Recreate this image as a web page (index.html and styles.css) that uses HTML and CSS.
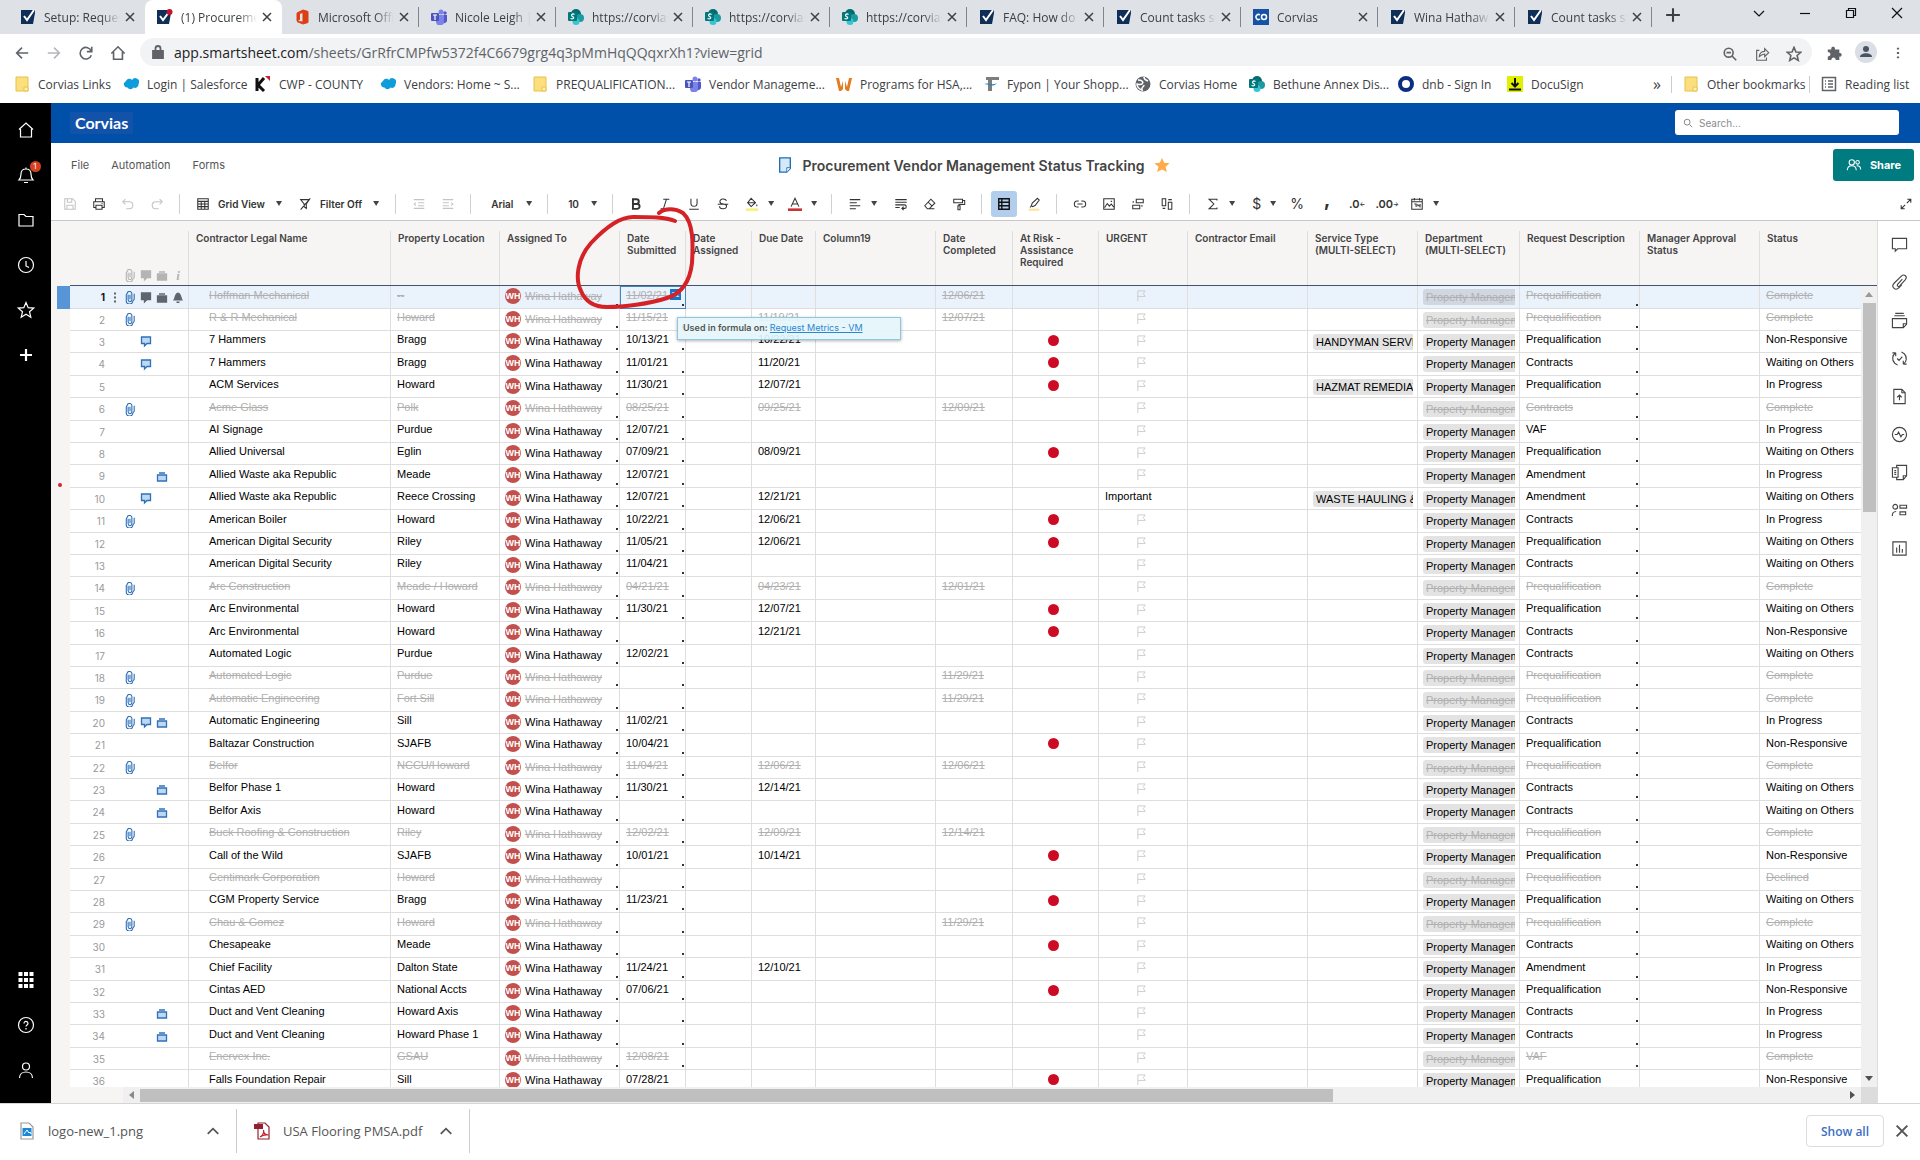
FILE: index.html
```html
<!DOCTYPE html>
<html lang="en">
<head>
    <meta charset="UTF-8">
    <meta name="viewport" content="width=device-width, initial-scale=1.0">
    <title>Procurement Vendor Management Status Tracking</title>
    <link rel="stylesheet" href="styles.css">
</head>
<body>
    <svg class="symbols" aria-hidden="true">
        <symbol id="i-smart" viewBox="0 0 14 16"><path d="M0 1h14v3l-2 11H0z" fill="#0f2f57"/><path d="M3 7l3 4 7-10" fill="none" stroke="#fff" stroke-width="2"/></symbol>
        <symbol id="i-smart-new" viewBox="0 0 16 16"><path d="M0 1h14v3l-2 11H0z" fill="#0f2f57"/><path d="M3 7l3 4 6-8" fill="none" stroke="#fff" stroke-width="2"/><circle cx="12.500" cy="3" r="3" fill="#c8102e"/></symbol>
        <symbol id="i-office" viewBox="0 0 16 16"><path d="M9 1l5 1.500v11L9 15l-6-2.500 6 .500V3.500L5.500 4.500v6L3 12V4z" fill="#dc3e15" stroke="#dc3e15"/></symbol>
        <symbol id="i-teams" viewBox="0 0 16 16"><circle cx="10" cy="3" r="2.500" fill="#7b83eb"/><circle cx="14" cy="4" r="1.700" fill="#5059c9"/><path d="M11 6h5v5a3 3 0 0 1-4 3z" fill="#5059c9"/><path d="M5 6h8v6a4 4 0 0 1-8 1z" fill="#7b83eb"/><rect x="0" y="4" width="8" height="8" rx="1" fill="#4b53bc"/><path d="M2 6h4M4 6v5" stroke="#fff" stroke-width="1.200"/></symbol>
        <symbol id="i-share-pt" viewBox="0 0 16 16"><circle cx="8" cy="5" r="5" fill="#036c70"/><circle cx="12" cy="9" r="4" fill="#1a9ba1"/><circle cx="8" cy="12.500" r="3.500" fill="#37c6d0"/><rect x="0" y="3" width="9" height="9" rx="1" fill="#03787c"/><path d="M6.500 5.500C4 4 2.500 6.500 4.500 7.500s1.500 3-2 2" fill="none" stroke="#fff" stroke-width="1.200"/></symbol>
        <symbol id="i-co" viewBox="0 0 16 16"><rect width="16" height="16" fill="#1552a5"/><circle cx="11" cy="8" r="2.500" fill="none" stroke="#fff" stroke-width="1.500"/><path d="M7 6a2.500 2.500 0 1 0 0 4" fill="none" stroke="#fff" stroke-width="1.500"/></symbol>
        <symbol id="i-x" viewBox="0 0 12 12"><path d="M2 2l8 8M10 2l-8 8" stroke="currentColor" stroke-width="1.500"/></symbol>
        <symbol id="i-folder-y" viewBox="0 0 16 16"><path d="M2 1h12v14H2z" fill="#fbdf7c" stroke="#e9c04d"/><path d="M10 11h4v4h-4z" fill="#fff0b5" stroke="#e9c04d"/></symbol>
        <symbol id="i-cloud" viewBox="0 0 16 16"><path d="M3 5a3.500 3.500 0 0 1 6-1 3.500 3.500 0 0 1 6.500 4 3.500 3.500 0 0 1-5 3.500 3.500 3.500 0 0 1-6 0A3.500 3.500 0 0 1 1 7z" fill="#0d9dda"/></symbol>
        <symbol id="i-k" viewBox="0 0 16 16"><path d="M2 2v13M9 2L3 9l6 6" fill="none" stroke="#111" stroke-width="3"/><path d="M10 0h5v5z" fill="#c8202f"/></symbol>
        <symbol id="i-w" viewBox="0 0 16 16"><path d="M0 2h3l2 9 2-6v8l-2 2H3zM16 2h-3l-2 9-2-6v8l2 2h2z" fill="#e47b1f"/></symbol>
        <symbol id="i-f" viewBox="0 0 16 16"><path d="M3 1h13v3H9v11H5V4H3z" fill="#7d7d7d"/><path d="M1 8c4-2 8 2 13-1-4 5-9 1-13 1z" fill="#2585c5"/></symbol>
        <symbol id="i-globe" viewBox="0 0 16 16"><circle cx="8" cy="8" r="7.500" fill="#5f6368"/><path d="M3 4c4 0 6 2 4 4-2 1-4 0-5 0 0 3 2 5 5 6-1-3 2-3 2-5M9 1c0 3 2 3 4 4" fill="none" stroke="#fff" stroke-width="1.500"/></symbol>
        <symbol id="i-dnb" viewBox="0 0 16 16"><circle cx="8" cy="8" r="6" fill="#fff" stroke="#0b2e83" stroke-width="4"/></symbol>
        <symbol id="i-docu" viewBox="0 0 16 16"><rect width="16" height="16" fill="#dff000"/><path d="M8 2v8M4.500 7L8 10.500 11.500 7M2 13.500h12" fill="none" stroke="#111" stroke-width="2"/></symbol>
        <symbol id="i-reading" viewBox="0 0 16 16" ><path d="M1.500 1.500h13v13h-13zM4 5h1M4 8h1M4 11h1M7 5h5M7 8h5M7 11h5" fill="none" stroke="#5f6368" stroke-width="1.500"/></symbol>

        <symbol id="i-home" viewBox="0 0 18 18"><path d="M2 8.500L9 2l7 6.500M3.500 8v8h11V8"/></symbol>
        <symbol id="i-bell" viewBox="0 0 18 18"><path d="M2 14h14c-2-2-2-3-2-6 0-3-2-5-5-5S4 5 4 8c0 3 0 4-2 6zM7 16.500h4M9 3V1.500"/></symbol>
        <symbol id="i-folder" viewBox="0 0 18 18"><path d="M2 3.500h5l2 2h7v9.500H2z"/></symbol>
        <symbol id="i-clock" viewBox="0 0 18 18"><circle cx="9" cy="9" r="7.500"/><path d="M9 5v5l3 1.500"/></symbol>
        <symbol id="i-star" viewBox="0 0 18 18"><path d="M9 1.500l2.200 5.200 5.500.400-4.200 3.600 1.300 5.500L9 13.300l-4.800 2.900 1.300-5.500L1.300 7.100l5.500-.400z"/></symbol>
        <symbol id="i-plus" viewBox="0 0 18 18"><path d="M9 3v12M3 9h12" stroke-width="2.200"/></symbol>
        <symbol id="i-apps" viewBox="0 0 18 18"><path d="M3.500 1v16M9 1v16M14.500 1v16" stroke-width="4" stroke-dasharray="4 2"/></symbol>
        <symbol id="i-help" viewBox="0 0 18 18"><circle cx="9" cy="9" r="7.500"/><path d="M7 7.500c0-3 4-2.500 4 0 0 1.500-2 1.500-2 3M9 12v1.500"/></symbol>
        <symbol id="i-user" viewBox="0 0 18 18"><circle cx="9" cy="5.500" r="3.500"/><path d="M2.500 17c0-8 13-8 13 0"/></symbol>

        <symbol id="i-save" viewBox="0 0 16 16"><path d="M2 2h9l3 3v9H2zM5 2v4h5V2M4.500 14V9.500h7V14"/></symbol>
        <symbol id="i-print" viewBox="0 0 16 16"><path d="M4 5.500V2h8v3.500M4 12H2V5.500h12V12h-2M4.500 9.500h7V14h-7zM11 7.500h1"/></symbol>
        <symbol id="i-undo" viewBox="0 0 16 16"><path d="M5 2.500L2 5.500l3 3M2 5.500h7.500a4 4 0 0 1 0 8H6"/></symbol>
        <symbol id="i-redo" viewBox="0 0 16 16"><path d="M11 2.500l3 3-3 3M14 5.500H6.500a4 4 0 0 0 0 8H10"/></symbol>
        <symbol id="i-gridview" viewBox="0 0 16 16"><path d="M2 2h12v12H2zM2 5h12M2 8h12M2 11h12M6 5v9M10 5v9"/></symbol>
        <symbol id="i-filter" viewBox="0 0 16 16"><path d="M3 3h10L9.500 8v5L7 11V8zM14 1.500L3 14.500"/></symbol>
        <symbol id="i-outdent" viewBox="0 0 16 16"><path d="M2 3h12M7 6.500h7M7 10h7M2 13h12M4.500 6.500l-2 1.700 2 1.700"/></symbol>
        <symbol id="i-indent" viewBox="0 0 16 16"><path d="M2 3h12M2 6.500h7M2 10h7M2 13h12M11.500 6.500l2 1.700-2 1.700"/></symbol>
        <symbol id="i-bold" viewBox="0 0 16 16"><path d="M4.500 2.500h4a2.700 2.700 0 0 1 0 5.400h-4zM4.500 8h4.800a2.800 2.800 0 0 1 0 5.600H4.500z" stroke-width="2.200"/></symbol>
        <symbol id="i-italic" viewBox="0 0 16 16"><path d="M6 2.500h7M3 13.500h7M9.700 2.500l-3.500 11"/></symbol>
        <symbol id="i-underline" viewBox="0 0 16 16"><path d="M4.500 2v5a3.500 3.500 0 0 0 7 0V2M2.500 14h11"/></symbol>
        <symbol id="i-strike" viewBox="0 0 16 16"><path d="M12 4.500c-1-3-8-3-7.500 1 .3 1.700 2 2.300 4 2.500s4 1 3.500 3.200c-1 3-8 3-8-.7M2 8.300h12"/></symbol>
        <symbol id="i-fill" viewBox="0 0 16 16"><path d="M7 1.500l5 5L7 11 3 6.500zM3 6.500h9M13.500 8.500v2"/><path d="M1 14.500h14" stroke="#f4f47c" stroke-width="3"/></symbol>
        <symbol id="i-color" viewBox="0 0 16 16"><path d="M3.500 11L8 1.500l4.500 9.500M5 8h6"/><path d="M0 14.500h16" stroke="#cb3136" stroke-width="3"/></symbol>
        <symbol id="i-align" viewBox="0 0 16 16"><path d="M2 3h12M2 6.500h8M2 10h12M2 13.500h7"/></symbol>
        <symbol id="i-wrap" viewBox="0 0 16 16"><path d="M1.500 3h13M1.500 6h13M1.500 9h10.500a2 2 0 0 1 0 4H9M11 11l-2 2 2 2M1.500 12h5"/></symbol>
        <symbol id="i-eraser" viewBox="0 0 16 16"><path d="M2 10l7-7.500 4.500 4.500L7 13.500H5zM6 6l4.500 4.500M7 13.500h6"/></symbol>
        <symbol id="i-painter" viewBox="0 0 16 16"><path d="M2 2.500h10v4H2zM12 4h2.500v4.500H8V10M6.800 10h2.400v4.500H6.800z"/></symbol>
        <symbol id="i-rows" viewBox="0 0 16 16"><path d="M2 2h12v12H2zM5.500 2v12M2 6h12M2 10h12" stroke-width="1.600"/></symbol>
        <symbol id="i-marker" viewBox="0 0 16 16"><path d="M12 1.500l2 2-4.500 6-3 1.500-1.500-1 1-3zM5 10l-1.500 2"/><path d="M2 14.500h12" stroke="#f8e5a2" stroke-width="2.500"/></symbol>
        <symbol id="i-link" viewBox="0 0 16 16"><path d="M6.500 4.500H5a3.500 3.500 0 0 0 0 7h1.500M9.500 4.500H11a3.500 3.500 0 0 1 0 7H9.500M5 8h6"/></symbol>
        <symbol id="i-image" viewBox="0 0 16 16"><path d="M2 2h12v12H2zM3 12l3-4.500 2.500 3L10.500 8l3 3.500M10 5h1.500"/></symbol>
        <symbol id="i-card" viewBox="0 0 16 16"><path d="M6 2.500h8v4H6zM2 9.500h8v4H2zM2.500 6.500v-2M12.500 9v2"/></symbol>
        <symbol id="i-cols" viewBox="0 0 16 16"><path d="M2.500 2h4v8h-4zM9.500 6h4v8h-4zM9.500 3h4M3 13h3"/></symbol>
        <symbol id="i-sum" viewBox="0 0 16 16"><path d="M12.500 4V2.500h-9L9 8l-5.500 5.500h9V12"/></symbol>
        <symbol id="i-date" viewBox="0 0 16 16"><path d="M2 2.500h12V14H2zM2 5.500h12M5 1v3M11 1v3M5 8h2v3.500M9 8v2h2.500M11.500 8v4"/></symbol>
        <symbol id="i-expand" viewBox="0 0 16 16"><path d="M9 7l4.500-4.500M9.500 2.500h4v4M7 9l-4.500 4.500M2.500 9.500v4h4"/></symbol>
        <symbol id="i-people" viewBox="0 0 18 16"><circle cx="6.500" cy="5" r="3"/><circle cx="13" cy="5" r="2"/><path d="M1.500 14c0-7 10-7 10 0M12 9c3-.5 4.500 1.500 4.500 4"/></symbol>

        <symbol id="r-comment" viewBox="0 0 18 18"><path d="M1.500 2.500h15v11H7l-2.500 2.500v-2.500h-3z"/></symbol>
        <symbol id="r-clip" viewBox="0 0 18 18"><path d="M12 5.500l-5 5.500c-1 1.500.8 3 2 1.800l6-6.500c3-3.500-1-7-4-4L3.500 9.500c-4 4 1 9 5 5l3-3.200"/></symbol>
        <symbol id="r-proof" viewBox="0 0 18 18"><path d="M4.500 1.500h9M3.500 4h11M1.500 7h15v6L13 16.500H1.500zM16.500 12.500H13v4"/></symbol>
        <symbol id="r-update" viewBox="0 0 18 18"><path d="M5 3a7 7 0 0 0-1 11l3 2M5 3H1.500M5 3v3.500M13 15a7 7 0 0 0 1-11l-3-2M13 15h3.500M13 15v-3.500M6.500 9l2 2 3.500-4"/></symbol>
        <symbol id="r-publish" viewBox="0 0 18 18"><path d="M3 1.500h8.500L15 5v11.500H3zM11.500 1.500V5H15M9 13V7.500M6.500 10L9 7.500l2.500 2.500"/></symbol>
        <symbol id="r-activity" viewBox="0 0 18 18"><circle cx="9" cy="9" r="7.500"/><path d="M4 9h2.500L8 6.500l2.500 5L12 9h2"/></symbol>
        <symbol id="r-summary" viewBox="0 0 18 18"><path d="M6 4V1.500h10.500v11L13 16.500H6V14M16.500 12.500H13v4M1.500 4h6v10h-6zM3.500 7h2M3.500 9h2M3.500 11h2"/></symbol>
        <symbol id="r-contacts" viewBox="0 0 18 18"><circle cx="4.500" cy="5" r="2.500"/><path d="M1.500 15c-.5-3 1-5 4-5M9.500 3.500h7v3h-7zM9.500 10.500h6v3h-6z"/></symbol>
        <symbol id="r-chart" viewBox="0 0 18 18"><path d="M2 2h14v14H2zM6 8v5.500M9 5v8.500M12 9.500v4"/></symbol>

        <symbol id="g-clip" viewBox="0 0 12 14"><path d="M4 4v5.500a2 2 0 0 0 4 0V3.500a2.500 2.500 0 0 0-5-1L2 4v6a3.500 3.500 0 0 0 7 1l1.500-2V3M6 4v5" fill="none" stroke="currentColor" stroke-width="1.200"/></symbol>
        <symbol id="g-comment" viewBox="0 0 12 12"><path d="M1.500 1.500h9v6.500H7L4.500 10.500V8h-3z" fill="var(--soft)" stroke="currentColor" stroke-width="1.300"/></symbol>
        <symbol id="g-case" viewBox="0 0 12 12"><path d="M1.500 4.500h9v6h-9zM3 2.500h6" fill="var(--soft)" stroke="currentColor" stroke-width="1.300"/></symbol>
        <symbol id="g-bell" viewBox="0 0 12 12"><path d="M1 9c2-2 1-7 5-8 4 1 3 6 5 8zM4.500 10h3v1.500h-3z" fill="currentColor"/></symbol>
        <symbol id="g-dots" viewBox="0 0 12 12"><path d="M6 1h2v2H6zM6 5h2v2H6zM6 9h2v2H6z" fill="currentColor"/></symbol>
        <symbol id="g-flag" viewBox="0 0 12 14"><path d="M2 13V2h8L8 5l2 3H2" fill="none" stroke="#c9c9c9"/></symbol>
    </svg>

    <header class="browser">
        <div class="tabs">
            <button class="tab plain"><svg><use href="#i-smart"/></svg><span>Setup: Request</span><svg class="x"><use href="#i-x"/></svg></button>
            <button class="tab active"><svg><use href="#i-smart-new"/></svg><span>(1) Procurement</span><svg class="x"><use href="#i-x"/></svg></button>
            <button class="tab"><svg><use href="#i-office"/></svg><span>Microsoft Office</span><svg class="x"><use href="#i-x"/></svg></button>
            <button class="tab"><svg><use href="#i-teams"/></svg><span>Nicole Leigh | M</span><svg class="x"><use href="#i-x"/></svg></button>
            <button class="tab"><svg><use href="#i-share-pt"/></svg><span>https://corvias</span><svg class="x"><use href="#i-x"/></svg></button>
            <button class="tab"><svg><use href="#i-share-pt"/></svg><span>https://corvias</span><svg class="x"><use href="#i-x"/></svg></button>
            <button class="tab"><svg><use href="#i-share-pt"/></svg><span>https://corvias</span><svg class="x"><use href="#i-x"/></svg></button>
            <button class="tab"><svg><use href="#i-smart"/></svg><span>FAQ: How do I</span><svg class="x"><use href="#i-x"/></svg></button>
            <button class="tab"><svg><use href="#i-smart"/></svg><span>Count tasks su</span><svg class="x"><use href="#i-x"/></svg></button>
            <button class="tab"><svg><use href="#i-co"/></svg><span>Corvias</span><svg class="x"><use href="#i-x"/></svg></button>
            <button class="tab"><svg><use href="#i-smart"/></svg><span>Wina Hathaway</span><svg class="x"><use href="#i-x"/></svg></button>
            <button class="tab"><svg><use href="#i-smart"/></svg><span>Count tasks su</span><svg class="x"><use href="#i-x"/></svg></button>
            <button class="new-tab line" aria-label="New tab"><svg viewBox="0 0 14 14"><path d="M7 1v12M1 7h12" stroke-width="1.800"/></svg></button>
            <div class="window-btns line">
                <button aria-label="Search tabs"><svg viewBox="0 0 12 12"><path d="M1 4l5 5 5-5"/></svg></button>
                <button aria-label="Minimize"><svg viewBox="0 0 12 12"><path d="M1 6.500h10"/></svg></button>
                <button aria-label="Restore"><svg viewBox="0 0 12 12"><path d="M1.500 3.500h7v7h-7zM3.500 3V1.500h7v7H9"/></svg></button>
                <button aria-label="Close"><svg viewBox="0 0 12 12"><path d="M1 1l10 10M11 1L1 11"/></svg></button>
            </div>
        </div>
        <div class="address line">
            <button aria-label="Back"><svg viewBox="0 0 18 18"><path d="M16 9H3M9 3L3 9l6 6"/></svg></button>
            <button class="off" aria-label="Forward"><svg viewBox="0 0 18 18"><path d="M2 9h13M9 3l6 6-6 6"/></svg></button>
            <button aria-label="Reload"><svg viewBox="0 0 18 18"><path d="M15 7a6.500 6.500 0 1 0 0 4.500M15.500 2v5.500H10"/></svg></button>
            <button aria-label="Home"><svg viewBox="0 0 18 18"><path d="M1.500 9.500L9 2l7.500 7.500M4 8v8h10V8"/></svg></button>
            <div class="omnibox">
                <svg class="lock" viewBox="0 0 12 14"><path d="M1 6h10v7H1z" fill="#5f6368"/><path d="M3.500 6V3.500a2.500 2.500 0 0 1 5 0V6"/></svg>
                <a href="#"><b>app.smartsheet.com</b>/sheets/GrRfrCMPfw5372f4C6679grg4q3pMmHqQQqxrXh1?view=grid</a>
                <button aria-label="Zoom"><svg viewBox="0 0 18 18"><circle cx="7.500" cy="7.500" r="5"/><path d="M11 11l5 5M5 7.500h5"/></svg></button>
                <button aria-label="Share page"><svg viewBox="0 0 18 18"><path d="M6 5H3v11h11v-3M6 12c0-4 3-6 6-6V3l4.500 4.500L12 12V9c-3 0-4 1-6 3z" stroke-width="1.300"/></svg></button>
                <button aria-label="Bookmark"><svg><use href="#i-star"/></svg></button>
            </div>
            <button class="ext" aria-label="Extensions"><svg viewBox="0 0 18 18"><path d="M2 5h4c-1-4 5-4 4 0h5v4c3.500-1 3.500 5 0 4v4h-4c0-4-5-4-5 0H2v-4c4 0 4-5 0-5z" fill="#5f6368" stroke="none"/></svg></button>
            <button class="me" aria-label="Profile"><svg viewBox="0 0 22 22"><circle cx="11" cy="11" r="11" fill="#dadfe6" stroke="none"/><path d="M5 16c0-5 12-5 12 0z" fill="#4a5366" stroke="none"/><circle cx="11" cy="8" r="3" fill="#4a5366" stroke="none"/></svg></button>
            <button aria-label="Menu"><svg viewBox="0 0 18 18"><path d="M9 3v2M9 8v2M9 13v2" stroke-width="2.500"/></svg></button>
        </div>
        <nav class="bookmarks">
            <a href="#"><svg><use href="#i-folder-y"/></svg>Corvias Links</a>
            <a href="#"><svg><use href="#i-cloud"/></svg>Login | Salesforce</a>
            <a href="#"><svg><use href="#i-k"/></svg>CWP - COUNTY</a>
            <a href="#"><svg><use href="#i-cloud"/></svg>Vendors: Home ~ S...</a>
            <a href="#"><svg><use href="#i-folder-y"/></svg>PREQUALIFICATION...</a>
            <a href="#"><svg><use href="#i-teams"/></svg>Vendor Manageme...</a>
            <a href="#"><svg><use href="#i-w"/></svg>Programs for HSA,...</a>
            <a href="#"><svg><use href="#i-f"/></svg>Fypon | Your Shopp...</a>
            <a href="#"><svg><use href="#i-globe"/></svg>Corvias Home</a>
            <a href="#"><svg><use href="#i-share-pt"/></svg>Bethune Annex Dis...</a>
            <a href="#"><svg><use href="#i-dnb"/></svg>dnb - Sign In</a>
            <a href="#"><svg><use href="#i-docu"/></svg>DocuSign</a>
            <button class="more" aria-label="More bookmarks">»</button>
            <a href="#" class="edge"><svg><use href="#i-folder-y"/></svg>Other bookmarks</a>
            <a href="#" class="edge"><svg><use href="#i-reading"/></svg>Reading list</a>
        </nav>
    </header>

    <div class="app">
        <nav class="side line">
            <button aria-label="Home"><svg><use href="#i-home"/></svg></button>
            <button aria-label="Notifications"><svg><use href="#i-bell"/></svg><span class="badge">1</span></button>
            <button aria-label="Browse"><svg><use href="#i-folder"/></svg></button>
            <button aria-label="Recents"><svg><use href="#i-clock"/></svg></button>
            <button aria-label="Favorites"><svg><use href="#i-star"/></svg></button>
            <button aria-label="Create"><svg><use href="#i-plus"/></svg></button>
            <button class="push" aria-label="Apps"><svg><use href="#i-apps"/></svg></button>
            <button aria-label="Help"><svg><use href="#i-help"/></svg></button>
            <button aria-label="Account"><svg><use href="#i-user"/></svg></button>
        </nav>

        <div class="work">
            <div class="brand">
                <span class="logo">Corvias</span>
                <label class="search line"><svg viewBox="0 0 12 12"><circle cx="5" cy="5" r="3.500"/><path d="M8 8l3 3"/></svg><input type="text" placeholder="Search..." aria-label="Search"></label>
            </div>
            <div class="title-bar">
                <div class="menus"><button>File</button><button>Automation</button><button>Forms</button></div>
                <div class="title">
                    <svg viewBox="0 0 14 18"><path d="M1 1h12v12l-4 4H1z" fill="#d5e9fa" stroke="#1f6fb5" stroke-width="1.500"/><path d="M13 12H9v5" fill="#fff" stroke="#1f6fb5"/></svg>
                    <h1>Procurement Vendor Management Status Tracking</h1>
                    <svg viewBox="0 0 18 18"><path d="M9 1l2.500 5.500 6 .500-4.500 4 1.500 6L9 14l-5.500 3L5 11 .5 7l6-.5z" fill="#fdab4b"/></svg>
                </div>
                <div class="share-wrap"><button class="share line"><svg><use href="#i-people"/></svg>Share</button></div>
            </div>
            <div class="toolbar line">
                <button class="off" aria-label="Save"><svg><use href="#i-save"/></svg></button>
                <button aria-label="Print"><svg><use href="#i-print"/></svg></button>
                <button class="off" aria-label="Undo"><svg><use href="#i-undo"/></svg></button>
                <button class="off" aria-label="Redo"><svg><use href="#i-redo"/></svg></button>
                <i class="sep"></i>
                <button class="wide"><svg><use href="#i-gridview"/></svg>Grid View<i class="caret"></i></button>
                <button class="wide"><svg><use href="#i-filter"/></svg>Filter Off<i class="caret"></i></button>
                <i class="sep"></i>
                <button class="off" aria-label="Outdent"><svg><use href="#i-outdent"/></svg></button>
                <button class="off" aria-label="Indent"><svg><use href="#i-indent"/></svg></button>
                <i class="sep"></i>
                <label class="pick"><select class="face" aria-label="Font"><option>Arial</option></select><i class="caret"></i></label>
                <i class="sep"></i>
                <label class="pick"><select class="size" aria-label="Font size"><option>10</option></select><i class="caret"></i></label>
                <i class="sep"></i>
                <button aria-label="Bold"><svg><use href="#i-bold"/></svg></button>
                <button aria-label="Italic"><svg><use href="#i-italic"/></svg></button>
                <button aria-label="Underline"><svg><use href="#i-underline"/></svg></button>
                <button aria-label="Strikethrough"><svg><use href="#i-strike"/></svg></button>
                <button class="drop" aria-label="Fill color"><svg><use href="#i-fill"/></svg><i class="caret"></i></button>
                <button class="drop" aria-label="Text color"><svg><use href="#i-color"/></svg><i class="caret"></i></button>
                <i class="sep"></i>
                <button class="drop roomy" aria-label="Align"><svg><use href="#i-align"/></svg><i class="caret"></i></button>
                <button aria-label="Wrap"><svg><use href="#i-wrap"/></svg></button>
                <button aria-label="Clear format"><svg><use href="#i-eraser"/></svg></button>
                <button aria-label="Format painter"><svg><use href="#i-painter"/></svg></button>
                <i class="sep"></i>
                <button class="on" aria-label="Conditional formatting"><svg><use href="#i-rows"/></svg></button>
                <button aria-label="Highlight changes"><svg><use href="#i-marker"/></svg></button>
                <i class="sep"></i>
                <button aria-label="Link"><svg><use href="#i-link"/></svg></button>
                <button aria-label="Image"><svg><use href="#i-image"/></svg></button>
                <button aria-label="Cell linking"><svg><use href="#i-card"/></svg></button>
                <button aria-label="Columns"><svg><use href="#i-cols"/></svg></button>
                <i class="sep"></i>
                <button class="drop" aria-label="Functions"><svg><use href="#i-sum"/></svg><i class="caret"></i></button>
                <button class="drop glyph">$<i class="caret"></i></button>
                <button class="glyph">%</button>
                <button class="glyph heavy">,</button>
                <button class="glyph small">.0<sub>←</sub></button>
                <button class="glyph small">.00<sub>→</sub></button>
                <button class="drop" aria-label="Date format"><svg><use href="#i-date"/></svg><i class="caret"></i></button>
                <button class="last" aria-label="Expand"><svg><use href="#i-expand"/></svg></button>
            </div>

            <div class="sheet">
                <div class="strip"><div class="row-mark"></div></div>
                <div class="grid-area">
                    <div class="table-wrap">
                        <table>
                            <colgroup>
                                <col class="w-gutter"><col class="w-name"><col class="w-loc"><col class="w-120"><col class="w-date"><col class="w-date"><col class="w-due"><col class="w-120"><col class="w-done"><col class="w-risk"><col class="w-urgent"><col class="w-120"><col class="w-service"><col class="w-dept"><col class="w-120"><col class="w-120"><col>
                            </colgroup>
                            <thead>
                                <tr>
                                    <th><div class="gutter-head"><svg><use href="#g-clip"/></svg><svg><use href="#g-comment"/></svg><svg><use href="#g-case"/></svg><em>i</em></div></th>
                                    <th><div>Contractor Legal Name</div></th>
                                    <th><div>Property Location</div></th>
                                    <th><div>Assigned To</div></th>
                                    <th><div>Date<br>Submitted</div></th>
                                    <th><div>Date<br>Assigned</div></th>
                                    <th><div>Due Date</div></th>
                                    <th><div>Column19</div></th>
                                    <th><div>Date<br>Completed</div></th>
                                    <th><div>At Risk -<br>Assistance<br>Required</div></th>
                                    <th><div>URGENT</div></th>
                                    <th><div>Contractor Email</div></th>
                                    <th><div>Service Type<br>(MULTI-SELECT)</div></th>
                                    <th><div>Department<br>(MULTI-SELECT)</div></th>
                                    <th><div>Request Description</div></th>
                                    <th><div>Manager Approval<br>Status</div></th>
                                    <th><div>Status</div></th>
                                </tr>
                            </thead>
                            <tbody id="rows"></tbody>
                        </table>
                        <div class="formula-tip">Used in formula on: <a href="#">Request Metrics - VM</a></div>
                    </div>
                    <div class="vscroll"><div class="vhead"></div><i class="up"></i><div class="vthumb"></div><i class="down"></i></div>
                    <div class="hscroll"><i class="left"></i><div class="htrack"><div class="hthumb"></div></div><i class="right"></i></div>
                    <div class="corner"></div>
                </div>
                <nav class="rail line">
                    <button aria-label="Conversations"><svg><use href="#r-comment"/></svg></button>
                    <button aria-label="Attachments"><svg><use href="#r-clip"/></svg></button>
                    <button aria-label="Proofs"><svg><use href="#r-proof"/></svg></button>
                    <button aria-label="Update requests"><svg><use href="#r-update"/></svg></button>
                    <button aria-label="Publish"><svg><use href="#r-publish"/></svg></button>
                    <button aria-label="Activity log"><svg><use href="#r-activity"/></svg></button>
                    <button aria-label="Sheet summary"><svg><use href="#r-summary"/></svg></button>
                    <button aria-label="Contacts"><svg><use href="#r-contacts"/></svg></button>
                    <button aria-label="Charts"><svg><use href="#r-chart"/></svg></button>
                </nav>
                <svg class="ink" viewBox="0 0 130 110"><path d="M104 16C94 12 80 12 62 12C48 12 34 23 20 38C6 54 4 74 10 86C15 98 24 102 36 102C52 102 78 99 96 93C112 88 119 76 121 58C122 40 123 18 112 8C104 3 94 3 88 8"/></svg>
                <i class="ink-dot"></i>
            </div>
        </div>
    </div>

    <footer class="downloads line">
        <button class="file">
            <svg viewBox="0 0 16 18"><path d="M2 1h8l4 4v12H2z" fill="#fff" stroke="#999"/><path d="M3.500 6h9v8h-9z" fill="#1b87d6" stroke="none"/><path d="M5 12l3-4 2 3 1-1 1 2" stroke="#fff" stroke-width="1"/></svg>
            <span>logo-new_1.png</span>
            <svg viewBox="0 0 12 12"><path d="M1.500 8.500L6 4l4.500 4.500"/></svg>
        </button>
        <button class="file">
            <svg viewBox="0 0 16 18"><path d="M4 1h7l4 4v12H4z" fill="#fff" stroke="#93202f"/><path d="M0 2h9v5H0z" fill="#93202f" stroke="none"/><path d="M6 15c3-2 4-5 3.500-7 0 3 2 5 5 5-3-.5-6 0-8.500 2z" stroke="#c0202f" stroke-width="1.200"/></svg>
            <span>USA Flooring PMSA.pdf</span>
            <svg viewBox="0 0 12 12"><path d="M1.500 8.500L6 4l4.500 4.500"/></svg>
        </button>
        <button class="show-all">Show all</button>
        <button class="close" aria-label="Close downloads"><svg><use href="#i-x"/></svg></button>
    </footer>

    <script src="script.js"></script>
</body>
</html>
```

FILE: styles.css
```css
* {
    box-sizing: border-box;
}
body {
    margin: 0;
    height: 100vh;
    display: flex;
    flex-direction: column;
    overflow: hidden;
    background: #fff;
    color: #3c4043;
    font-family: "Open Sans", "Noto Sans", sans-serif;
    font-size: 12px;
}
button, input, select {
    font: inherit;
    color: inherit;
    border: 0;
    padding: 0;
    background: none;
}
a {
    color: inherit;
    text-decoration: none;
}
svg {
    width: 16px;
    height: 16px;
    flex: none;
}
.symbols {
    display: none;
}
.line svg {
    fill: none;
    stroke: currentColor;
    stroke-width: 1.2;
}

/* browser chrome */
.browser {
    flex: none;
}
.tabs {
    display: flex;
    height: 34px;
    padding-left: 8px;
    background: #dee1e6;
}
.tab {
    position: relative;
    display: flex;
    align-items: center;
    width: 137px;
    padding: 0 9px 0 12px;
    text-align: left;
}
.tab::after {
    content: "";
    position: absolute;
    right: 0;
    top: 7px;
    width: 1px;
    height: 20px;
    background: #80868b;
}
.tab.plain::after, .tab.active::after {
    display: none;
}
.tab span {
    flex: 1;
    margin: 0 4px 0 8px;
    overflow: hidden;
    white-space: nowrap;
    -webkit-mask-image: linear-gradient(to right, #000 75%, transparent);
    mask-image: linear-gradient(to right, #000 75%, transparent);
}
.tab.active {
    background: #fff;
    border-radius: 8px 8px 0 0;
}
.tab .x {
    width: 12px;
    height: 12px;
}
.new-tab {
    width: 42px;
}
.window-btns {
    display: flex;
    margin-left: auto;
    height: 28px;
    color: #111;
}
.window-btns button {
    width: 46px;
}
.window-btns svg {
    width: 12px;
    height: 12px;
}
.address {
    display: flex;
    align-items: center;
    height: 36px;
    padding: 0 6px;
    color: #5f6368;
}
.address button {
    width: 32px;
    height: 28px;
}
.address svg {
    width: 16px;
    height: 16px;
    stroke-width: 1.8;
    vertical-align: middle;
}
.address .off {
    color: #b4b7ba;
}
.omnibox {
    flex: 1;
    display: flex;
    align-items: center;
    height: 28px;
    margin: 0 6px;
    padding: 0 2px 0 12px;
    border-radius: 14px;
    background: #f1f3f4;
    font-size: 14px;
}
.omnibox a {
    flex: 1;
}
.omnibox b {
    font-weight: 400;
    color: #202124;
}
.address .lock {
    width: 12px;
    height: 14px;
    margin-right: 10px;
}
.address .me svg {
    width: 22px;
    height: 22px;
}
.bookmarks {
    display: grid;
    grid-template-columns: 109px 132px 125px 152px 153px 151px 147px 152px 114px 149px 109px 100px 1fr 138px 106px;
    align-items: center;
    height: 33px;
    padding: 0 5px 5px 14px;
    white-space: nowrap;
}
.bookmarks a {
    display: flex;
    align-items: center;
    gap: 8px;
}
.bookmarks .more {
    justify-self: end;
    margin-right: 10px;
    font-size: 16px;
}
.bookmarks .edge {
    padding-left: 11px;
    border-left: 1px solid #ccc;
}

/* application frame */
.app {
    flex: 1;
    display: flex;
    min-height: 0;
    font-family: Inter, Roboto, sans-serif;
}
.side {
    display: flex;
    flex-direction: column;
    align-items: center;
    width: 51px;
    padding: 4px 0 11px;
    background: #000;
    color: #fff;
}
.side button {
    position: relative;
    width: 50px;
    height: 45px;
}
.side .push {
    margin-top: auto;
}
.side svg {
    width: 18px;
    height: 18px;
    margin-top: 4px;
}
.badge {
    position: absolute;
    top: 9px;
    right: 10px;
    width: 11px;
    height: 11px;
    border-radius: 50%;
    background: #d5411f;
    font-size: 8px;
    line-height: 11px;
}
.work {
    flex: 1;
    min-width: 0;
    display: flex;
    flex-direction: column;
}
.brand {
    display: flex;
    align-items: center;
    justify-content: space-between;
    flex: none;
    height: 40px;
    padding: 0 21px 1px 19px;
    background: #004fa9;
}
.logo {
    padding: 0 5px;
    background: #1252a8;
    color: #fff;
    font-family: Lato, sans-serif;
    font-size: 16px;
    font-weight: 700;
    line-height: 22px;
}
.search {
    display: flex;
    align-items: center;
    gap: 6px;
    width: 224px;
    height: 25px;
    padding: 0 8px;
    border-radius: 3px;
    background: #fff;
    color: #888;
}
.search svg {
    width: 10px;
    height: 10px;
}
.search input {
    flex: 1;
    min-width: 0;
    font-size: 10px;
}
.search input::placeholder {
    color: #8b8b8b;
}
.title-bar {
    display: grid;
    grid-template-columns: 1fr auto 1fr;
    align-items: center;
    flex: none;
    height: 44px;
    padding: 0 6px 0 20px;
}
.menus {
    display: flex;
    gap: 22px;
    font-size: 11px;
    color: #555;
}
.title {
    display: flex;
    align-items: center;
    gap: 10px;
    padding-right: 38px;
}
.title h1 {
    margin: 0;
    font-size: 14px;
    font-weight: 600;
    color: #444;
}
.share-wrap {
    display: flex;
    justify-content: flex-end;
}
.share {
    display: flex;
    align-items: center;
    justify-content: center;
    gap: 8px;
    width: 81px;
    height: 32px;
    border-radius: 3px;
    background: #007c80;
    color: #fff;
    font-size: 11px;
    font-weight: 700;
}
.toolbar {
    display: flex;
    align-items: center;
    flex: none;
    height: 34px;
    padding-left: 4px;
    border-bottom: 1px solid #c8c8c8;
    color: #333;
    font-size: 10px;
    font-weight: 600;
}
.toolbar button {
    display: flex;
    align-items: center;
    justify-content: center;
    min-width: 29px;
    height: 26px;
}
.toolbar svg {
    width: 14px;
    height: 14px;
}
.toolbar .off {
    color: #c4c4c4;
}
.toolbar .on {
    min-width: 26px;
    margin: 0 2px 0 1px;
    border-radius: 3px;
    background: #b3cdec;
    color: #111;
}
.toolbar .wide {
    padding-left: 8px;
}
.toolbar .wide svg {
    margin-right: 8px;
}
.toolbar .wide .caret {
    margin: 0 6px 0 9px;
}
.pick .caret {
    margin: 0 5px 0 8px;
}
.toolbar .drop {
    padding-left: 8px;
}
.toolbar .drop .caret {
    margin: 0 4px 0 7px;
}
.toolbar .roomy {
    padding-right: 3px;
}
.toolbar .glyph {
    min-width: 30px;
    font-size: 14px;
    font-weight: 400;
}
.toolbar .glyph.drop {
    padding-left: 11px;
}
.toolbar .heavy {
    font-size: 20px;
    font-weight: 700;
    padding-bottom: 10px;
}
.toolbar .small {
    font-size: 11px;
    font-weight: 600;
}
.toolbar sub {
    font-size: 6px;
}
.toolbar .last {
    margin-left: auto;
}
.sep {
    width: 1px;
    height: 20px;
    margin: 0 8px;
    background: #d0d0d0;
}
.caret {
    width: 10px;
    height: 5px;
    background: #444;
    clip-path: polygon(20% 0, 80% 0, 50% 100%);
}
.pick {
    display: flex;
    align-items: center;
    padding-left: 12px;
}
.pick select {
    appearance: none;
}
.face {
    width: 25px;
}
.size {
    width: 13px;
}

/* sheet */
.sheet {
    position: relative;
    flex: 1;
    display: flex;
    min-height: 0;
    background: #f7f5f4;
}
.strip {
    width: 19px;
    padding: 65px 0 0 6px;
}
.row-mark {
    height: 23px;
    background: #5795d6;
}
.grid-area {
    flex: 1;
    min-width: 0;
    display: grid;
    grid-template-columns: 1fr 16px;
    grid-template-rows: 1fr 16px;
    min-height: 0;
}
.table-wrap {
    position: relative;
    overflow: hidden;
    background: #fff;
}
table {
    width: 100%;
    table-layout: fixed;
    border-collapse: separate;
    border-spacing: 0;
    color: #000;
    font-family: "Liberation Sans", Arial, sans-serif;
    font-size: 11px;
}
.w-gutter { width: 119px; }
.w-name { width: 202px; }
.w-loc { width: 109px; }
.w-120 { width: 120px; }
.w-date { width: 66px; }
.w-due { width: 64px; }
.w-done { width: 77px; }
.w-risk { width: 86px; }
.w-urgent { width: 89px; }
.w-service { width: 110px; }
.w-dept { width: 102px; }
th {
    height: 65px;
    padding: 10px 0 0;
    border-bottom: 1px solid #42546e;
    background: #f7f5f4;
    color: #444;
    font-family: Inter, Roboto, sans-serif;
    font-size: 10px;
    font-weight: 600;
    line-height: 12px;
    text-align: left;
}
th > div {
    height: 54px;
    padding: 1px 0 0 7px;
    border-right: 1px solid #dedede;
    white-space: nowrap;
}
th:last-child > div {
    border-right: 0;
}
th .gutter-head {
    --soft: #b4b4b4;
    display: flex;
    align-items: flex-end;
    gap: 4px;
    padding: 0 0 3px 54px;
    color: #b4b4b4;
}
.gutter-head svg, .gutter svg {
    width: 12px;
    height: 13px;
}
.gutter-head em {
    width: 12px;
    text-align: center;
    font-family: "Liberation Serif", serif;
    font-size: 13px;
}
td {
    height: 22px;
    padding: 0 0 5px 6px;
    overflow: hidden;
    border-right: 1px solid #dedede;
    border-bottom: 1px solid #dedede;
    line-height: 14px;
    white-space: nowrap;
}
tr:nth-child(5n+1) td, tr:nth-child(5n+4) td {
    height: 23px;
}
td.name {
    padding-left: 20px;
}
td.center {
    padding: 0 4px 3px 0;
}
td.gutter-cell {
    padding: 0;
}
td:last-child {
    border-right: 0;
}
.gutter {
    --soft: #bcd8f3;
    display: grid;
    grid-template-columns: 35px 17px 16px 16px 16px 16px;
    align-items: center;
    justify-items: center;
    color: #2f70b8;
}
.gutter span {
    justify-self: end;
    color: #999;
    font-family: Inter, Roboto, sans-serif;
    font-size: 10px;
}
.mark {
    background: linear-gradient(#333, #333) right 1px bottom 2px / 2px 2px no-repeat;
}
.who {
    display: flex;
    align-items: center;
    gap: 4px;
}
.who i {
    width: 16px;
    height: 16px;
    border-radius: 50%;
    background: #c2504e;
    color: #fff;
    font-size: 9px;
    font-style: normal;
    font-weight: 700;
    line-height: 16px;
    text-align: center;
}
td.assigned {
    padding: 0 0 2px 5px;
}
.dot {
    display: block;
    width: 11px;
    height: 11px;
    margin: 0 auto;
    border-radius: 50%;
    background: #cc0a24;
}
td .flag {
    display: block;
    width: 11px;
    height: 13px;
    margin: 0 auto;
}
.tag {
    height: 16px;
    padding-left: 3px;
    overflow: hidden;
    border-radius: 3px 0 0 3px;
    background: rgba(0, 0, 0, .11);
    line-height: 17px;
}
td.tag-cell {
    padding: 2px 4px 2px 5px;
}
.done td, .done .who span {
    color: #b0b0b0;
    text-decoration: line-through;
}
.done td.gutter-cell, .done td.assigned {
    text-decoration: none;
}
.selected td {
    background-color: #eaf2fc;
}
.selected .gutter {
    --soft: #5f656d;
    color: #5f656d;
}
.selected .gutter span {
    color: #111;
    font-weight: 700;
}
.selected .gutter .clip {
    color: #2f70b8;
}
.cursor {
    display: flex;
    align-items: center;
    justify-content: space-between;
    padding-right: 4px;
}
.cursor span {
    text-decoration: line-through;
}
.cursor i {
    width: 11px;
    height: 11px;
    background: #1673c9;
    color: #fff;
    font-size: 7px;
    font-style: normal;
    line-height: 12px;
    text-align: center;
}
.selected td.current {
    outline: 1px solid #4585bd;
    outline-offset: -1px;
    text-decoration: none;
}
.formula-tip {
    position: absolute;
    left: 607px;
    top: 96px;
    width: 224px;
    height: 23px;
    padding-left: 5px;
    border: 1px solid #8fc7dc;
    background: rgba(228, 245, 251, .92);
    box-shadow: 0 1px 3px rgba(0, 0, 0, .3);
    color: #555;
    font-size: 9px;
    font-weight: 600;
    line-height: 20px;
    white-space: nowrap;
}
.formula-tip a {
    color: #2a86d0;
    font-weight: 400;
    text-decoration: underline;
}
.vscroll {
    display: flex;
    flex-direction: column;
    align-items: center;
    background: #f0f0f0;
}
.vhead {
    align-self: stretch;
    height: 65px;
    border-bottom: 1px solid #42546e;
    background: #f7f5f4;
}
.vthumb {
    width: 13px;
    height: 209px;
    background: #bfbfbf;
}
.up, .down, .left, .right {
    background: #505050;
    clip-path: polygon(50% 0, 100% 100%, 0 100%);
}
.up, .down {
    width: 8px;
    height: 5px;
    margin: 6px 0;
}
.up {
    background: #999;
}
.down {
    margin-top: auto;
    clip-path: polygon(0 0, 100% 0, 50% 100%);
}
.hscroll {
    display: flex;
    align-items: center;
    margin-left: 53px;
    background: #f0f0f0;
}
.left, .right {
    width: 5px;
    height: 8px;
    margin: 0 6px;
}
.left {
    background: #8a8a8a;
    clip-path: polygon(100% 0, 100% 100%, 0 50%);
}
.right {
    clip-path: polygon(0 0, 100% 50%, 0 100%);
}
.htrack {
    flex: 1;
}
.hthumb {
    width: 70%;
    height: 13px;
    background: #bfbfbf;
}
.corner {
    background: #dcdcdc;
}
.rail {
    display: flex;
    flex-direction: column;
    align-items: center;
    width: 43px;
    padding-top: 4px;
    border-left: 1px solid #ddd;
    background: #fff;
    color: #444;
}
.rail button {
    width: 42px;
    height: 38px;
}
.rail svg {
    width: 17px;
    height: 17px;
    vertical-align: middle;
}
.ink {
    position: absolute;
    left: 520px;
    top: -16px;
    width: 130px;
    height: 110px;
    fill: none;
    stroke: #d42227;
    stroke-width: 4;
    stroke-linecap: round;
}
.ink-dot {
    position: absolute;
    left: 7px;
    top: 262px;
    width: 4px;
    height: 4px;
    border-radius: 50%;
    background: #d42227;
}

/* downloads shelf */
.downloads {
    display: flex;
    align-items: center;
    flex: none;
    height: 57px;
    padding: 0 10px 2px 0;
    border-top: 1px solid #d5d5d5;
    color: #555;
    font-size: 13px;
}
.file {
    display: flex;
    align-items: center;
    width: 237px;
    height: 44px;
    padding: 0 16px 0 18px;
    border-right: 1px solid #ccc;
}
.file + .file {
    width: 233px;
    padding-left: 16px;
}
.file span {
    flex: 1;
    margin-left: 12px;
    text-align: left;
}
.file svg:first-child {
    width: 18px;
    height: 18px;
}
.file svg:last-child {
    width: 14px;
    height: 14px;
    stroke-width: 1.5;
}
.show-all {
    width: 78px;
    height: 32px;
    margin-left: auto;
    border: 1px solid #dadce0;
    border-radius: 4px;
    color: #3b70c4;
    font-size: 12px;
    font-weight: 600;
}
.close {
    margin-left: 10px;
    height: 16px;
}
```

FILE: script.js
```javascript
// icons (a = attachment, c = comment, p = proof, b = reminder), name, location, submitted, due, completed, at risk, urgent, service, description, status
const rows = [
    ['acpb', 'Hoffman Mechanical', '--', '11/02/21', '', '12/06/21', 0, '', '', 'Prequalification', 'Complete'],
    ['a', 'R & R Mechanical', 'Howard', '11/15/21', '11/19/21', '12/07/21', 0, '', '', 'Prequalification', 'Complete'],
    ['c', '7 Hammers', 'Bragg', '10/13/21', '10/22/21', '', 1, '', 'HANDYMAN SERVICES', 'Prequalification', 'Non-Responsive'],
    ['c', '7 Hammers', 'Bragg', '11/01/21', '11/20/21', '', 1, '', '', 'Contracts', 'Waiting on Others'],
    ['', 'ACM Services', 'Howard', '11/30/21', '12/07/21', '', 1, '', 'HAZMAT REMEDIATION', 'Prequalification', 'In Progress'],
    ['a', 'Acme Glass', 'Polk', '08/25/21', '09/25/21', '12/09/21', 0, '', '', 'Contracts', 'Complete'],
    ['', 'AI Signage', 'Purdue', '12/07/21', '', '', 0, '', '', 'VAF', 'In Progress'],
    ['', 'Allied Universal', 'Eglin', '07/09/21', '08/09/21', '', 1, '', '', 'Prequalification', 'Waiting on Others'],
    ['p', 'Allied Waste aka Republic', 'Meade', '12/07/21', '', '', 0, '', '', 'Amendment', 'In Progress'],
    ['c', 'Allied Waste aka Republic', 'Reece Crossing', '12/07/21', '12/21/21', '', 0, 'Important', 'WASTE HAULING & RECYCLING', 'Amendment', 'Waiting on Others'],
    ['a', 'American Boiler', 'Howard', '10/22/21', '12/06/21', '', 1, '', '', 'Contracts', 'In Progress'],
    ['', 'American Digital Security', 'Riley', '11/05/21', '12/06/21', '', 1, '', '', 'Prequalification', 'Waiting on Others'],
    ['', 'American Digital Security', 'Riley', '11/04/21', '', '', 0, '', '', 'Contracts', 'Waiting on Others'],
    ['a', 'Arc Construction', 'Meade / Howard', '04/21/21', '04/23/21', '12/01/21', 0, '', '', 'Prequalification', 'Complete'],
    ['', 'Arc Environmental', 'Howard', '11/30/21', '12/07/21', '', 1, '', '', 'Prequalification', 'Waiting on Others'],
    ['', 'Arc Environmental', 'Howard', '', '12/21/21', '', 1, '', '', 'Contracts', 'Non-Responsive'],
    ['', 'Automated Logic', 'Purdue', '12/02/21', '', '', 0, '', '', 'Contracts', 'Waiting on Others'],
    ['a', 'Automated Logic', 'Purdue', '', '', '11/29/21', 0, '', '', 'Prequalification', 'Complete'],
    ['a', 'Automatic Engineering', 'Fort Sill', '', '', '11/29/21', 0, '', '', 'Prequalification', 'Complete'],
    ['acp', 'Automatic Engineering', 'Sill', '11/02/21', '', '', 0, '', '', 'Contracts', 'In Progress'],
    ['', 'Baltazar Construction', 'SJAFB', '10/04/21', '', '', 1, '', '', 'Prequalification', 'Non-Responsive'],
    ['a', 'Belfor', 'NCCU/Howard', '11/04/21', '12/06/21', '12/06/21', 0, '', '', 'Prequalification', 'Complete'],
    ['p', 'Belfor Phase 1', 'Howard', '11/30/21', '12/14/21', '', 0, '', '', 'Contracts', 'Waiting on Others'],
    ['p', 'Belfor Axis', 'Howard', '', '', '', 0, '', '', 'Contracts', 'Waiting on Others'],
    ['a', 'Buck Roofing & Construction', 'Riley', '12/02/21', '12/09/21', '12/14/21', 0, '', '', 'Prequalification', 'Complete'],
    ['', 'Call of the Wild', 'SJAFB', '10/01/21', '10/14/21', '', 1, '', '', 'Prequalification', 'Non-Responsive'],
    ['', 'Centimark Corporation', 'Howard', '', '', '', 0, '', '', 'Prequalification', 'Declined'],
    ['', 'CGM Property Service', 'Bragg', '11/23/21', '', '', 1, '', '', 'Prequalification', 'Waiting on Others'],
    ['a', 'Chau & Gomez', 'Howard', '', '', '11/29/21', 0, '', '', 'Prequalification', 'Complete'],
    ['', 'Chesapeake', 'Meade', '', '', '', 1, '', '', 'Contracts', 'Waiting on Others'],
    ['', 'Chief Facility', 'Dalton State', '11/24/21', '12/10/21', '', 0, '', '', 'Amendment', 'In Progress'],
    ['', 'Cintas AED', 'National Accts', '07/06/21', '', '', 1, '', '', 'Prequalification', 'Non-Responsive'],
    ['p', 'Duct and Vent Cleaning', 'Howard Axis', '', '', '', 0, '', '', 'Contracts', 'In Progress'],
    ['p', 'Duct and Vent Cleaning', 'Howard Phase 1', '', '', '', 0, '', '', 'Contracts', 'In Progress'],
    ['', 'Enervex Inc.', 'GSAU', '12/08/21', '', '', 0, '', '', 'VAF', 'Complete'],
    ['', 'Falls Foundation Repair', 'Sill', '07/28/21', '', '', 1, '', '', 'Prequalification', 'Non-Responsive']
];

const esc = s => s.replace(/&/g, '&amp;');
const icon = (id, show, cls = '') => show ? `<svg class="${cls}"><use href="#${id}"/></svg>` : '<i></i>';

document.getElementById('rows').innerHTML = rows.map((r, i) => {
    const [icons, name, loc, submitted, due, completed, risk, urgent, service, desc, status] = r;
    const done = status === 'Complete' || status === 'Declined';
    const first = i === 0;
    return `<tr class="${done ? 'done' : ''} ${first ? 'selected' : ''}">
        <td class="gutter-cell"><div class="gutter"><span>${i + 1}</span>${icon('g-dots', first)}
            ${icon('g-clip', icons.includes('a'), 'clip')}${icon('g-comment', icons.includes('c'))}${icon('g-case', icons.includes('p'))}${icon('g-bell', icons.includes('b'))}</div></td>
        <td class="name">${esc(name)}</td>
        <td>${loc}</td>
        <td class="assigned mark"><div class="who"><i>WH</i><span>Wina Hathaway</span></div></td>
        <td class="mark ${first ? 'current' : ''}">${first ? `<div class="cursor"><span>${submitted}</span><i>31</i></div>` : submitted}</td>
        <td></td>
        <td>${due}</td>
        <td></td>
        <td>${completed}</td>
        <td class="center">${risk ? '<i class="dot"></i>' : ''}</td>
        <td class="${urgent ? '' : 'center'}">${urgent || '<svg class="flag"><use href="#g-flag"/></svg>'}</td>
        <td></td>
        <td class="tag-cell">${service ? `<div class="tag">${esc(service)}</div>` : ''}</td>
        <td class="tag-cell"><div class="tag">Property Management</div></td>
        <td class="mark">${desc}</td>
        <td></td>
        <td>${status}</td>
    </tr>`;
}).join('');
```
